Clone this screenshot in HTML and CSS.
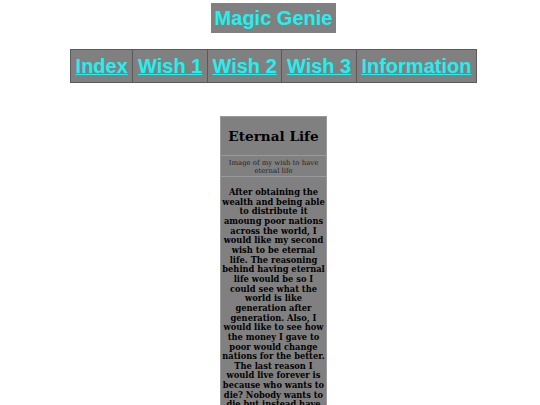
FILE: index.html
```html
<!DOCTYPE html>
<html>
<head>
<meta charset="utf-8">
<link rel="stylesheet" href="styles.css">
</head>
<body>
<div class="page">
  <h1 class="title">Magic Genie</h1>
  <table class="nav">
    <tr>
      <td><a href="#">Index</a></td>
      <td><a href="#">Wish 1</a></td>
      <td><a href="#">Wish 2</a></td>
      <td><a href="#">Wish 3</a></td>
      <td><a href="#">Information</a></td>
    </tr>
  </table>
  <div class="card">
    <h2 class="card-title">Eternal Life</h2>
    <div class="card-img">Image of my wish to have eternal life</div>
    <p class="card-text">After obtaining the wealth and being able to distribute it amoung poor nations across the world, I would like my second wish to be eternal life. The reasoning behind having eternal life would be so I could see what the world is like generation after generation. Also, I would like to see how the money I gave to poor would change nations for the better. The last reason I would live forever is because who wants to die? Nobody wants to die but instead have the chance to see everything.</p>
  </div>
</div>
</body>
</html>
```

FILE: styles.css
```css
html, body {
  margin: 0;
  padding: 0;
  background: #ffffff;
}
.page {
  display: flex;
  flex-direction: column;
  align-items: center;
  padding: 3px 0 0 7px;
  font-family: "DejaVu Serif", serif;
}
.title {
  margin: 0;
  background: #808080;
  color: #1ff0f0;
  font-family: "Liberation Sans", Arial, sans-serif;
  font-weight: bold;
  font-size: 20px;
  line-height: 24px;
  padding: 3px 4px 3px 4px;
}
.nav {
  margin-top: 16px;
  border-collapse: collapse;
  background: #808080;
  border: 1px solid #9a9a9a;
}
.nav td {
  border: 1px solid #5a5a5a;
  padding: 5px 4.6px 4px;
  font-family: "Liberation Sans", Arial, sans-serif;
  font-weight: bold;
  font-size: 20px;
  line-height: 23px;
}
.nav a {
  color: #1ff0f0;
  text-decoration: underline;
  text-decoration-thickness: 1px;
}
.card {
  margin-top: 33px;
  width: 105px;
  background: #808080;
  border-left: 1px solid #9a9a9a;
  border-right: 1px solid #9a9a9a;
  border-top: 1px solid #9a9a9a;
  text-align: center;
  color: #000;
}
.card-title {
  margin: 0;
  padding: 11px 0 11px;
  font-size: 13.6px;
  line-height: 16px;
  font-weight: bold;
  border-bottom: 1px solid #9a9a9a;
}
.card-img {
  font-size: 6.9px;
  line-height: 8px;
  padding: 3px 2px 1px;
  color: #222;
  border-bottom: 1px solid #9a9a9a;
}
.card-text {
  margin: 0;
  padding: 11px 1px 8px;
  font-size: 8.3px;
  line-height: 9.65px;
  font-weight: bold;
}
```
